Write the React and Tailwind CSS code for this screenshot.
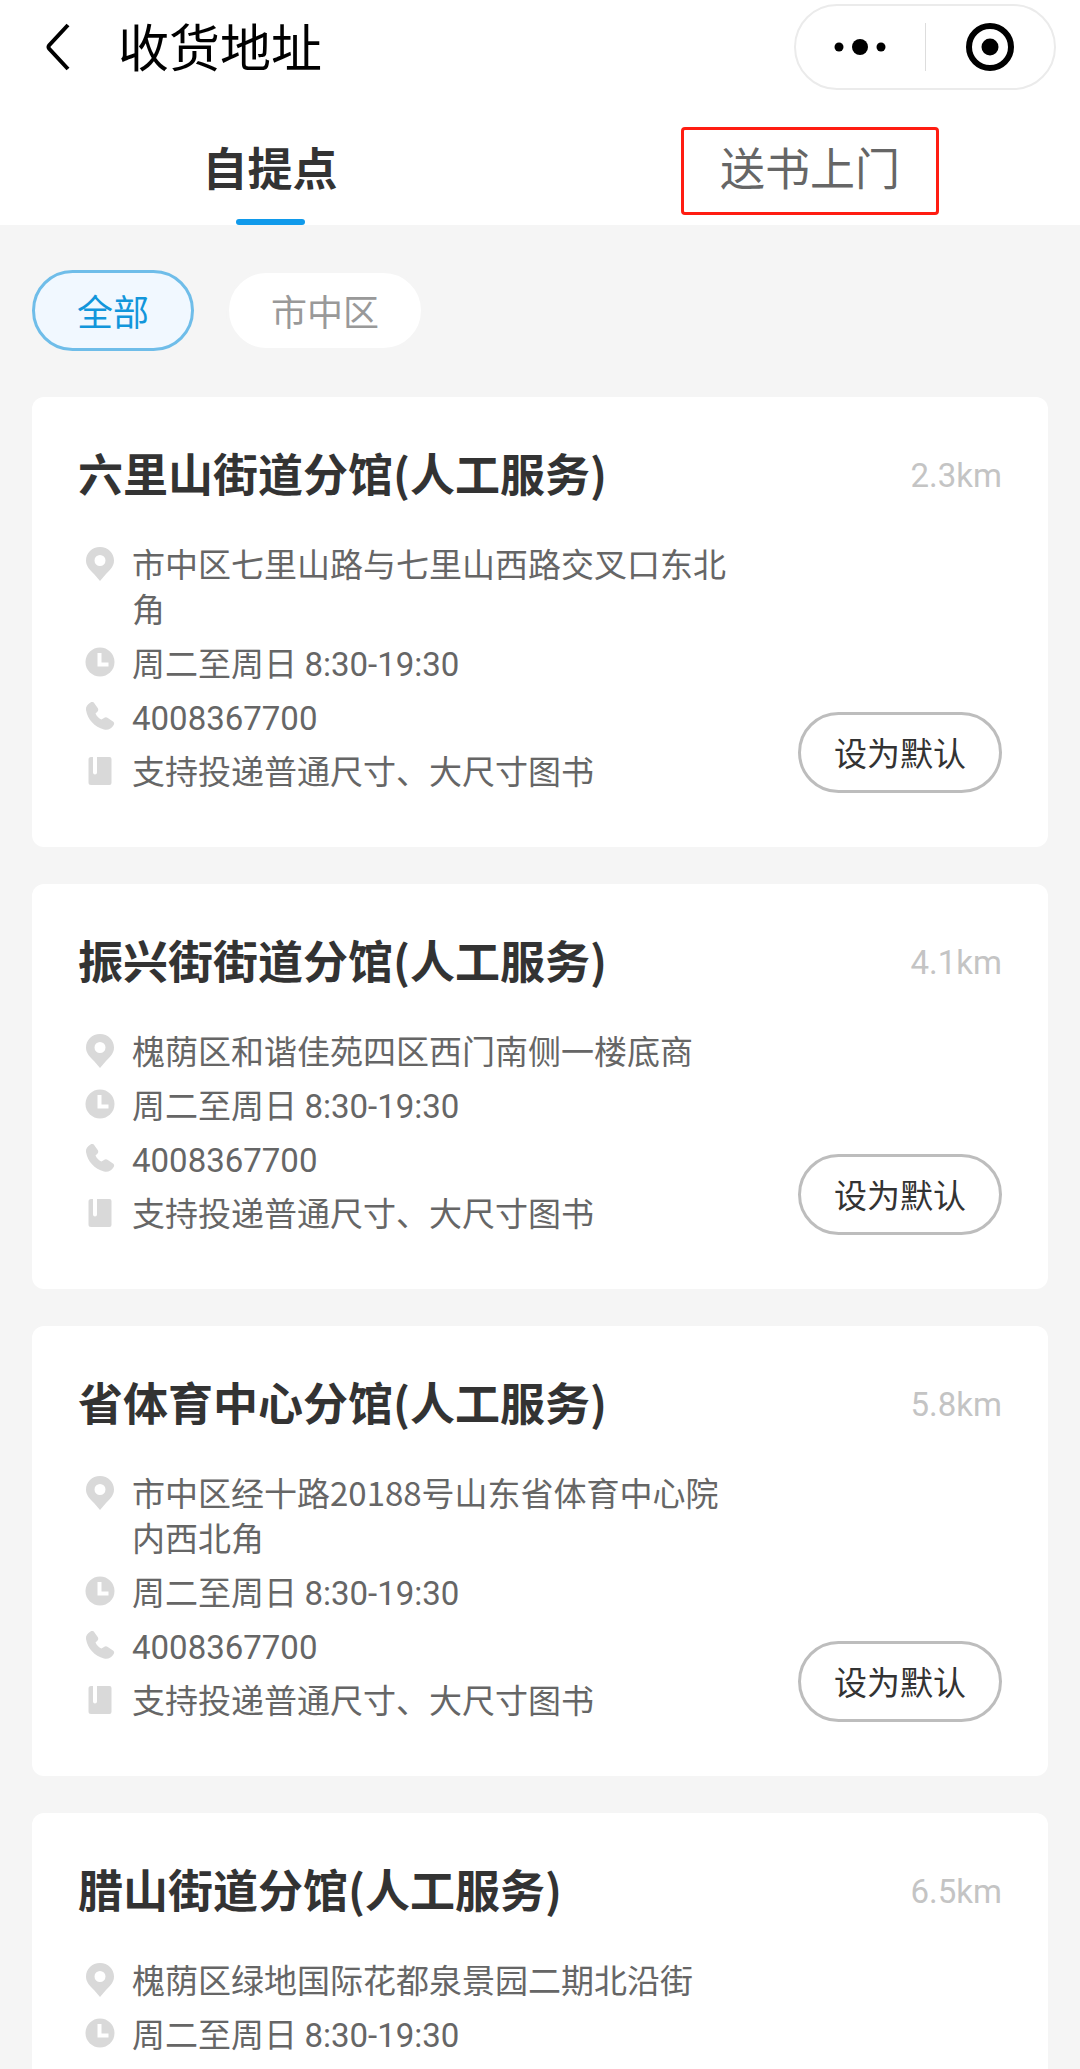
import { useState } from 'react';

const tabs = [
  { id: 'pickup', label: '自提点' },
  { id: 'delivery', label: '送书上门', marked: true },
];

const districts = ['全部', '市中区'];

const branches = [
  { id: 1, name: '六里山街道分馆(人工服务)', distance: '2.3km', address: '市中区七里山路与七里山西路交叉口东北角' },
  { id: 2, name: '振兴街街道分馆(人工服务)', distance: '4.1km', address: '槐荫区和谐佳苑四区西门南侧一楼底商' },
  { id: 3, name: '省体育中心分馆(人工服务)', distance: '5.8km', address: '市中区经十路20188号山东省体育中心院内西北角' },
  { id: 4, name: '腊山街道分馆(人工服务)', distance: '6.5km', address: '槐荫区绿地国际花都泉景园二期北沿街' },
];

const days = '周二至周日';
const hours = '8:30-19:30';
const phone = '4008367700';
const support = '支持投递普通尺寸、大尺寸图书';

function PinIcon() {
  return (
    <path
      fillRule="evenodd"
      d="M18 1C10 1 4 7 4 14.500c0 6 4 9.500 8 13.500l6 7 6-7c4-4 8-7.500 8-13.500C32 7 26 1 18 1Zm0 8a5.500 5.500 0 1 1 0 11 5.500 5.500 0 0 1 0-11Z"
    />
  );
}

function ClockIcon() {
  return (
    <>
      <circle cx="18" cy="17" r="14.500" />
      <path d="M17.500 8v11.500h9" fill="none" stroke="white" strokeWidth="4" />
    </>
  );
}

function PhoneIcon() {
  return (
    <path d="M8.500 3.500c1.500-.9 3-.5 4 .9l3.200 4.500c.9 1.300.7 2.700-.4 3.800l-1.800 1.900c1.200 2.800 3.200 4.800 5.900 6l2.600-1.700c1.200-.8 2.600-.8 3.800 0l5.200 3.600c1.300.9 1.500 2.300.7 3.600-2 3.500-5.700 5.500-9.700 4.500C12.500 27.800 5.600 20.500 4 11c-.5-3.200 1.500-5.800 4.500-7.500Z" />
  );
}

function BookIcon() {
  return (
    <path d="M9 4h2v15.500a2 2 0 0 0 4 0V4h12.500A2 2 0 0 1 29.500 6v24a2 2 0 0 1-2 2H9a2.500 2.500 0 0 1-2.500-2.500v-23A2.500 2.500 0 0 1 9 4Z" />
  );
}

function Latin({ children }) {
  return <span className="font-[Roboto,sans-serif] leading-none">{children}</span>;
}

function InfoRow({ icon, children }) {
  return (
    <li className="flex items-start gap-[14px]">
      <span className="ml-1 flex h-[45px] w-9 shrink-0 items-center">
        <svg viewBox="0 0 36 36" className="size-9 fill-[#d9d9d9]" aria-hidden="true">{icon}</svg>
      </span>
      <span>{children}</span>
    </li>
  );
}

function BranchCard({ branch }) {
  return (
    <article className="rounded-xl bg-white px-[46px] pt-[46px] pb-[54px]">
      <div className="flex items-center justify-between">
        <h2 className="text-[45px] leading-[60px] font-bold text-[#333333]">{branch.name}</h2>
        <p className="text-[33px] leading-[45px] text-[#c4c4c4]">
          <Latin>{branch.distance}</Latin>
        </p>
      </div>
      <div className="mt-[38px] flex items-end justify-between gap-16">
        <ul className="flex-1 space-y-[9px] text-[33px] leading-[45px] text-[#666666]">
          <InfoRow icon={<PinIcon />}>{branch.address}</InfoRow>
          <InfoRow icon={<ClockIcon />}>{days} <Latin>{hours}</Latin></InfoRow>
          <InfoRow icon={<PhoneIcon />}><Latin>{phone}</Latin></InfoRow>
          <InfoRow icon={<BookIcon />}>{support}</InfoRow>
        </ul>
        <button
          type="button"
          className="h-[81px] shrink-0 rounded-full border-3 border-[#bdbdbd] px-[33px] text-[33px] leading-[45px] text-[#333333]"
        >
          设为默认
        </button>
      </div>
    </article>
  );
}

export default function App() {
  const [tab, setTab] = useState('pickup');
  const [district, setDistrict] = useState('全部');

  return (
    <div className="flex h-screen flex-col overflow-hidden bg-[#f5f5f5] font-['Noto_Sans_CJK_SC',sans-serif]">
      <header className="shrink-0 bg-white">
        <div className="flex items-center pt-1 pr-6 pl-[22px]">
          <button type="button" aria-label="返回" className="flex size-[72px] items-center justify-center">
            <svg viewBox="0 0 24 48" className="h-12 w-6" fill="none" stroke="black" strokeWidth="4">
              <path d="M22 2 L3 22.500 Q2 24 3 25.500 L22 46" />
            </svg>
          </button>
          <h1 className="ml-6 flex-1 pb-1 text-[51px] leading-[72px] text-black">收货地址</h1>

          {/* Mini program capsule */}
          <div className="flex h-[86px] w-[262px] items-center rounded-full border-2 border-[#ebebeb]">
            <button type="button" aria-label="更多" className="flex h-12 flex-1 items-center justify-center border-r border-[#dddddd]">
              <svg viewBox="0 0 52 16" className="h-4 w-[52px]">
                <circle cx="5" cy="8" r="4.500" />
                <circle cx="26" cy="8" r="8" />
                <circle cx="47" cy="8" r="4.500" />
              </svg>
            </button>
            <button type="button" aria-label="关闭" className="flex h-12 flex-1 items-center justify-center">
              <svg viewBox="0 0 48 48" className="size-12">
                <circle cx="24" cy="24" r="21" fill="none" stroke="black" strokeWidth="6" />
                <circle cx="24" cy="24" r="8.500" />
              </svg>
            </button>
          </div>
        </div>

        <nav className="grid grid-cols-2 pt-[37px]">
          {tabs.map(item => (
            <button
              key={item.id}
              type="button"
              onClick={() => setTab(item.id)}
              className="flex flex-col items-center gap-1"
            >
              <span
                className={`flex h-[88px] items-center rounded-sm border-3 px-9 pb-2 text-[45px] leading-[60px] ${
                  item.marked ? 'border-[#ff1d12]' : 'border-transparent'
                } ${tab === item.id ? 'font-bold text-[#333333]' : 'text-[#666666]'}`}
              >
                {item.label}
              </span>
              <span className={`h-[6px] w-[69px] rounded-full ${tab === item.id ? 'bg-[#109aeb]' : 'bg-transparent'}`} />
            </button>
          ))}
        </nav>
      </header>

      <main className="min-h-0 flex-1 overflow-y-auto px-8 pt-[45px] pb-9 [scrollbar-width:none]">
        <div className="flex gap-8">
          {districts.map(name => (
            <button
              key={name}
              type="button"
              onClick={() => setDistrict(name)}
              className={`h-[81px] rounded-full border-3 px-[42px] text-[36px] leading-[45px] ${
                district === name
                  ? 'border-[#6fbde9] bg-[#f1f8ff] text-[#1296db]'
                  : 'border-[#f5f5f5] bg-white text-[#999999]'
              }`}
            >
              {name}
            </button>
          ))}
        </div>

        <div className="mt-[46px] space-y-[37px]">
          {branches.map(branch => (
            <BranchCard key={branch.id} branch={branch} />
          ))}
        </div>
      </main>
    </div>
  );
}
